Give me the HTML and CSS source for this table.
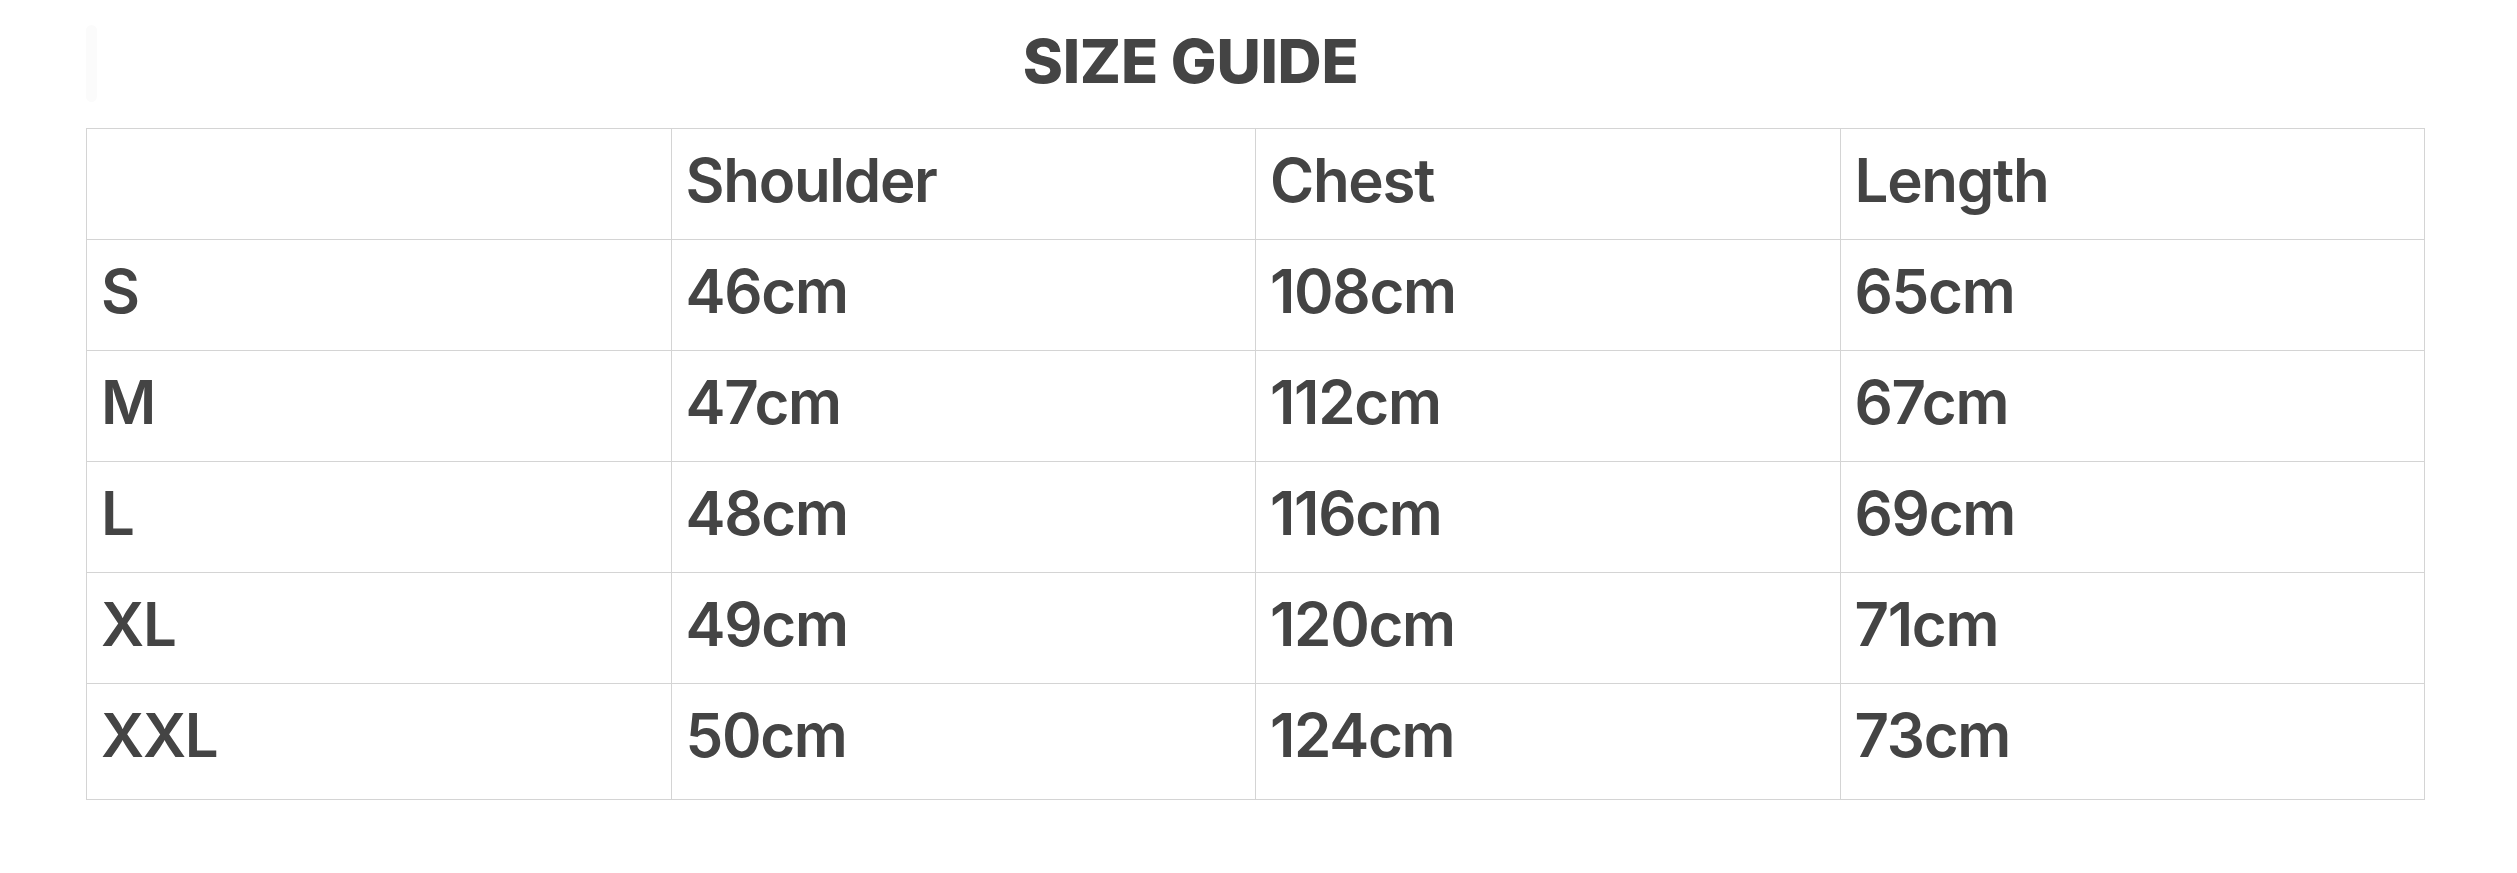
FILE: index.html
```html
<!DOCTYPE html>
<html lang="en">
<head>
<meta charset="utf-8">
<title>Size Guide</title>
<link rel="stylesheet" href="styles.css">
</head>
<body>
<div class="page">
  <div class="header">
    <span class="ghost"></span>
    <h1 class="title">SIZE GUIDE</h1>
  </div>
  <table class="sizes">
    <colgroup><col><col><col><col></colgroup>
    <tbody>
      <tr><td></td><td>Shoulder</td><td>Chest</td><td>Length</td></tr>
      <tr><td>S</td><td>46cm</td><td>108cm</td><td>65cm</td></tr>
      <tr><td>M</td><td>47cm</td><td>112cm</td><td>67cm</td></tr>
      <tr><td>L</td><td>48cm</td><td>116cm</td><td>69cm</td></tr>
      <tr><td>XL</td><td>49cm</td><td>120cm</td><td>71cm</td></tr>
      <tr class="last"><td>XXL</td><td>50cm</td><td>124cm</td><td>73cm</td></tr>
    </tbody>
  </table>
</div>
</body>
</html>
```
FILE: styles.css
```css
html, body {
  margin: 0;
  padding: 0;
  background: #ffffff;
}
body {
  font-family: Inter, "Liberation Sans", Arial, sans-serif;
  color: #444444;
}
.page {
  padding: 0 92px 0 86px;
}
.header {
  display: flex;
  align-items: flex-start;
  height: 128px;
}
.ghost {
  flex: 0 0 11px;
  height: 77px;
  margin-top: 25px;
  border-radius: 6px;
  background: #fbfbfb;
}
.title {
  flex: 1;
  margin: 25px 0 0 0;
  padding-right: 141px;
  text-align: center;
  font-size: 61px;
  line-height: 72px;
  font-weight: 800;
  color: #444444;
  letter-spacing: -0.3px;
}
.sizes {
  width: 100%;
  border-collapse: collapse;
  table-layout: fixed;
}
.sizes td {
  border: 1px solid #d4d4d4;
  height: 111px;
  box-sizing: border-box;
  padding: 15px 16px 23px 14px;
  font-size: 60px;
  line-height: 72px;
  font-weight: 600;
  color: #444444;
  vertical-align: top;
  white-space: nowrap;
  letter-spacing: -1.3px;
}
.sizes .last td {
  height: 116px;
}
```
